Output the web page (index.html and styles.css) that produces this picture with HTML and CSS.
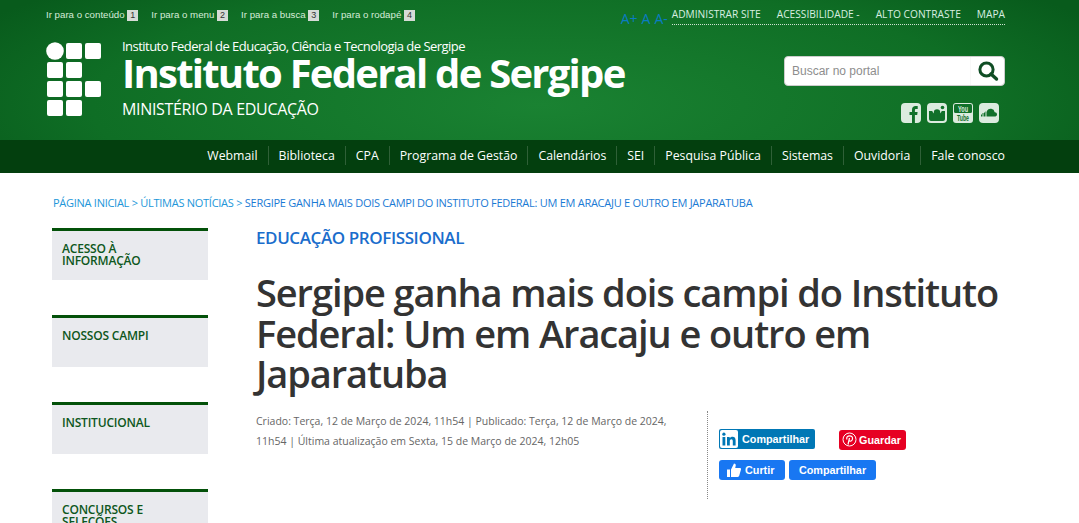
FILE: index.html
```html
<!DOCTYPE html>
<html lang="pt-BR">
<head>
<meta charset="utf-8">
<title>Instituto Federal de Sergipe</title>
<link rel="stylesheet" href="styles.css">
</head>
<body>
<header class="header">
  <div class="topbar">
    <ul class="skip">
      <li>Ir para o conteúdo <b>1</b></li>
      <li>Ir para o menu <b>2</b></li>
      <li>Ir para a busca <b>3</b></li>
      <li>Ir para o rodapé <b>4</b></li>
    </ul>
    <div class="tools">
      <div class="sizes"><span>A+</span><span>A</span><span>A-</span></div>
      <ul class="service">
        <li>ADMINISTRAR SITE</li>
        <li>ACESSIBILIDADE -</li>
        <li>ALTO CONTRASTE</li>
        <li>MAPA</li>
      </ul>
    </div>
  </div>
  <div class="brandrow">
    <div class="brand">
      <div class="logo">
        <i class="round"></i><i></i><i></i>
        <i></i><i></i><i class="none"></i>
        <i></i><i></i><i></i>
        <i></i><i></i><i class="none"></i>
      </div>
      <div class="names">
        <div class="over">Instituto Federal de Educação, Ciência e Tecnologia de Sergipe</div>
        <h1>Instituto Federal de Sergipe</h1>
        <div class="under">MINISTÉRIO DA EDUCAÇÃO</div>
      </div>
    </div>
    <div class="side">
      <div class="search">
        <span class="placeholder">Buscar no portal</span>
        <span class="searchbtn">
          <svg width="22" height="22" viewBox="0 0 22 22"><circle cx="9.5" cy="9.5" r="6.6" fill="none" stroke="#0f4d24" stroke-width="3"/><path d="M14 14l5.5 5" stroke="#0f4d24" stroke-width="3.4" stroke-linecap="round"/></svg>
        </span>
      </div>
      <div class="social">
        <svg width="20" height="20" viewBox="0 0 20 20"><rect width="20" height="20" rx="4" fill="#dcebdf"/><path d="M11 20v-8h-2.500v-3h2.500v-2.300c0-2.500 1.500-3.700 3.500-3.700h2.200v3h-1.500c-1 0-1.300.5-1.300 1.300v1.700h2.700l-.4 3h-2.300v8z" fill="#11702a"/></svg>
        <svg width="20" height="20" viewBox="0 0 20 20"><rect width="20" height="20" rx="4" fill="#dcebdf"/><path d="M2 8h3.200a5.200 5.200 0 0 0 9.600 0h3.200v8a2 2 0 0 1-2 2H4a2 2 0 0 1-2-2z" fill="#11702a"/><circle cx="10" cy="9.500" r="3.200" fill="#11702a"/><circle cx="15.500" cy="4.500" r="1.800" fill="#11702a"/></svg>
        <svg width="20" height="20" viewBox="0 0 20 20"><rect width="20" height="20" rx="3" fill="#dcebdf"/><rect x="1" y="1" width="18" height="9" rx="1.500" fill="#11702a"/><text x="5" y="8.500" class="yt yt-top" textLength="10" lengthAdjust="spacingAndGlyphs">You</text><text x="4" y="18" class="yt yt-bottom" textLength="12" lengthAdjust="spacingAndGlyphs">Tube</text></svg>
        <svg width="20" height="20" viewBox="0 0 20 20"><rect width="20" height="20" rx="4" fill="#dcebdf"/><path d="M8 13.500V7.800a4.200 4.200 0 0 1 7.700 1.400 2.200 2.200 0 0 1 .8 4.300z" fill="#11702a"/><path d="M2.500 11.500v2M4 10v3.500M5.500 9.500v4M7 8.500v5" stroke="#11702a" stroke-width="1"/></svg>
      </div>
    </div>
  </div>
</header>
<nav class="nav">
  <a>Webmail</a><a>Biblioteca</a><a>CPA</a><a>Programa de Gestão</a><a>Calendários</a><a>SEI</a><a>Pesquisa Pública</a><a>Sistemas</a><a>Ouvidoria</a><a>Fale conosco</a>
</nav>
<div class="breadcrumb">
  <a>PÁGINA INICIAL</a> &gt; <a>ÚLTIMAS NOTÍCIAS</a> &gt; <a class="current">SERGIPE GANHA MAIS DOIS CAMPI DO INSTITUTO FEDERAL: UM EM ARACAJU E OUTRO EM JAPARATUBA</a>
</div>
<div class="layout">
  <aside class="sidebar">
    <div class="block">ACESSO À INFORMAÇÃO</div>
    <div class="block">NOSSOS CAMPI</div>
    <div class="block">INSTITUCIONAL</div>
    <div class="block">CONCURSOS E SELEÇÕES</div>
  </aside>
  <main class="article">
    <div class="kicker">EDUCAÇÃO PROFISSIONAL</div>
    <h2>Sergipe ganha mais dois campi do Instituto Federal: Um em Aracaju e outro em Japaratuba</h2>
    <div class="metarow">
      <p class="meta">Criado: Terça, 12 de Março de 2024, 11h54 | Publicado: Terça, 12 de Março de 2024, 11h54 | Última atualização em Sexta, 15 de Março de 2024, 12h05</p>
      <div class="share">
        <div class="sharerow first">
          <span class="btn linkedin">
            <svg width="20" height="20" viewBox="0 0 20 20"><rect x="1" y="1" width="18" height="18" rx="2" fill="#fff"/><rect x="3.500" y="8" width="2.800" height="8.500" fill="#0077b5"/><circle cx="4.900" cy="5.200" r="1.600" fill="#0077b5"/><path d="M8 8h2.700v1.300c.6-1 1.600-1.500 2.900-1.500 2.200 0 3 1.500 3 3.800v5h-2.800v-4.500c0-1.100-.4-1.900-1.400-1.900s-1.600.8-1.600 1.900v4.500H8z" fill="#0077b5"/></svg>
            Compartilhar
          </span>
          <span class="btn pinterest">
            <svg width="15" height="15" viewBox="0 0 15 15"><circle cx="7.500" cy="7.500" r="6.500" fill="none" stroke="#fff" stroke-width="1"/><path d="M6 12.500l1.500-6.500M5 7.500C4 5.500 5.500 3.800 7.700 3.800c2 0 3 1.300 2.800 2.900-.2 1.700-1.300 2.700-2.400 2.500-.6-.1-1-.5-1.100-1" fill="none" stroke="#fff" stroke-width="1.200"/></svg>
            Guardar
          </span>
        </div>
        <div class="sharerow">
          <span class="btn fb">
            <svg width="14" height="14" viewBox="0 0 14 14"><path d="M0 6.500h3V14H0zM4 6.500 7 .5c1.300 0 2 1 1.700 2.300L8.200 5H13c.9 0 1.300.8 1 1.600l-1.800 6.200c-.2.700-.7 1.200-1.500 1.200H4z" fill="#fff"/></svg>
            Curtir
          </span>
          <span class="btn fb wide">Compartilhar</span>
        </div>
      </div>
    </div>
  </main>
</div>
</body>
</html>
```

FILE: styles.css
```css
* { box-sizing: border-box; }
html, body { margin: 0; padding: 0; height: 523px; overflow: hidden; background: #fff; }
body { font-family: "Open Sans", sans-serif; color: #333; }
ul { list-style: none; margin: 0; padding: 0; }

.header {
  height: 140px;
  padding: 0 74px 0 45px;
  background: radial-gradient(ellipse 640px 170px at 50% 75%, #1a8232 0%, #0f6e25 70%, #085b1c 100%);
  color: #fff;
}
.topbar { height: 38px; display: flex; justify-content: space-between; align-items: flex-start; }
.skip { display: flex; gap: 13px; padding: 9px 0 0 1px; font: 9.7px/12px "Liberation Sans", sans-serif; color: #d6ecd9; }
.skip b { display: inline-block; width: 11px; height: 11px; background: #d6dbd6; color: #333; font-weight: 400; font-size: 9px; line-height: 11px; text-align: center; vertical-align: 0; }
.tools { display: flex; align-items: flex-start; gap: 4px; }
.sizes { display: flex; gap: 4px; padding-top: 11px; font-size: 14px; line-height: 16px; color: #0a7cc4; }
.service { display: flex; gap: 16px; height: 25px; padding-top: 7px; border-bottom: 1px dotted #cfe3d2; font-size: 10.2px; line-height: 14px; color: #d8efe0; font-weight: 400; }

.brandrow { display: flex; justify-content: space-between; align-items: flex-start; }
.brand { display: flex; gap: 21px; }
.logo { display: grid; grid-template-columns: repeat(3, 16px); grid-auto-rows: 16px; gap: 3px; margin: 5px 0 0 2px; }
.logo i { background: #fff; border-radius: 2px; }
.logo .round { border-radius: 50%; transform: scale(1.1); }
.logo .none { background: none; }
.over { font-size: 13px; line-height: 16px; letter-spacing: -.53px; }
h1 { margin: 0; font-size: 40px; line-height: 38px; font-weight: 700; letter-spacing: -1.75px; color: #fff; }
.under { font-size: 16px; line-height: 18px; margin-top: 8px; letter-spacing: -.32px; }

.side { width: 221px; display: flex; flex-direction: column; align-items: flex-end; padding-top: 18px; }
.search { width: 221px; height: 30px; display: flex; background: #fff; border: 1px solid #ccc; border-radius: 4px; font: 12px/28px "Liberation Sans", sans-serif; color: #8d8d8d; }
.placeholder { flex: 1; padding-left: 7px; }
.searchbtn { width: 34px; display: flex; align-items: center; justify-content: center; border-left: 1px solid #f8f8f8; }
.social { display: flex; gap: 6px; margin-top: 17px; padding-right: 6px; }
.yt { font: 700 9px "Liberation Sans", sans-serif; }
.yt-top { fill: #dcebdf; }
.yt-bottom { fill: #11702a; }

.nav { height: 33px; padding: 0 74px 2px 0; display: flex; justify-content: flex-end; align-items: center; background: #033f0e; }
.nav a { font-size: 12.3px; line-height: 19px; color: #fff; padding: 0 10px; border-left: 1px solid #2f6037; }
.nav a:first-child { border-left: 0; }
.nav a:last-child { padding-right: 0; }

.breadcrumb { margin: 23px 0 0 53px; font-size: 11px; line-height: 14px; color: #2196d9; letter-spacing: -.27px; height: 18px; }
.breadcrumb .current { color: #1a7ad4; }
.layout { display: flex; margin: 14px 0 0 52px; gap: 48px; }
.sidebar { width: 156px; flex: none; display: flex; flex-direction: column; gap: 35px; }
.block { height: 52px; padding: 12px 30px 0 10px; flex: none; background: #e9eaee; border-top: 3px solid #035109; color: #0d5720; font-size: 12px; line-height: 12px; font-weight: 600; letter-spacing: -.2px; }
.article { width: 750px; flex: none; }
.kicker { font-size: 17px; line-height: 20px; color: #1a6dcc; font-weight: 600; letter-spacing: -.4px; }
h2 { margin: 24px 0 0; font-size: 38px; line-height: 40.5px; font-weight: 600; color: #333; letter-spacing: -1.09px; }
.metarow { display: flex; margin-top: 17px; }
.meta { width: 451px; flex: none; margin: 0; padding-right: 10px; font-size: 10.5px; line-height: 20px; color: #666; }
.share { height: 88px; border-left: 1px dotted #888; padding: 18px 0 0 11px; }
.sharerow { display: flex; gap: 4px; }
.sharerow.first { gap: 24px; margin-bottom: 10px; align-items: flex-start; }
.btn { height: 20px; display: inline-flex; align-items: center; border-radius: 2px; color: #fff; font: 700 10.8px/20px "Liberation Sans", sans-serif; }
.linkedin { width: 96px; background: #0077b5; gap: 3px; }
.pinterest { width: 67px; background: #e60023; gap: 2px; padding-left: 3px; margin-top: 1px; border-radius: 3px; }
.fb { background: #1877f2; border-radius: 3px; gap: 4px; padding: 0 9px 0 8px; width: 66px; }
.fb.wide { width: 87px; justify-content: center; padding: 0; }
```
